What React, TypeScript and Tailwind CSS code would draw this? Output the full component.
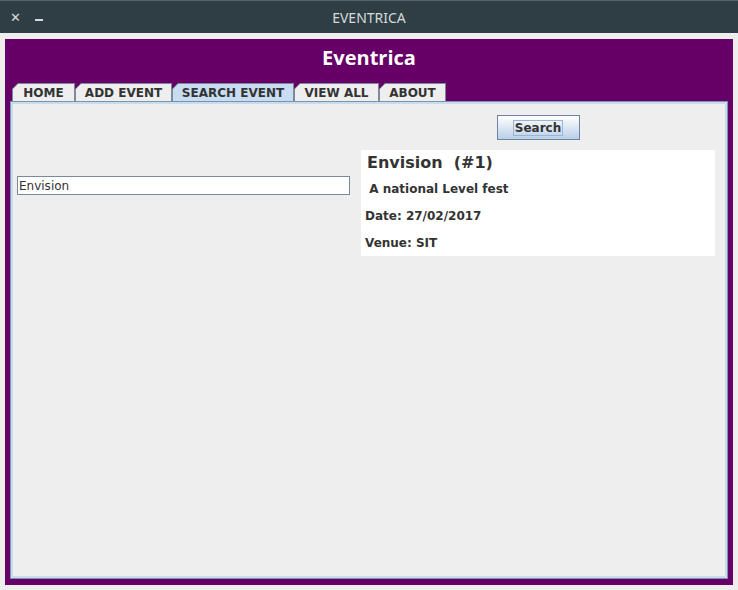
const font = { fontFamily: '"DejaVu Sans", sans-serif' };

function Tab({ label, active, width }: { label: string; active?: boolean; width: string }) {
  return (
    <div
      className={`${width} h-[18px] pt-px px-px bg-[#7b8a9a] [clip-path:polygon(0_6px,6px_0,100%_0,100%_100%,0_100%)]`}
    >
      <div
        className={`h-full flex items-center justify-center text-[12px] font-bold text-[#333333] leading-none [clip-path:polygon(0_5px,5px_0,100%_0,100%_100%,0_100%)] ${
          active ? "bg-[#c8ddf2]" : "bg-[#eeeeee]"
        }`}
      >
        {label}
      </div>
    </div>
  );
}

export default function App() {
  return (
    <div className="w-[738px] h-[590px] bg-[#eeeeee] flex flex-col" style={font}>
      {/* window title bar */}
      <div className="h-[33px] bg-[#2f3e45] border-t border-[#56636a] flex items-center relative">
        <div className="flex items-center gap-[14px] pl-[10px] text-[#d5dadc] absolute left-0">
          <span className="text-[13px] font-bold leading-none">✕</span>
          <span className="w-[8px] h-[2px] bg-[#d5dadc] mt-[6px]"></span>
        </div>
        <div
          className="flex-1 text-center text-[14px] text-[#d5dadc]"
          style={{ fontFamily: '"Noto Sans", sans-serif' }}
        >
          EVENTRICA
        </div>
      </div>

      {/* purple frame */}
      <div className="mt-[6px] mx-[5px] h-[546px] bg-[#660066] flex flex-col">
        <div
          className="h-[38px] flex items-center justify-center text-white text-[20px] font-bold"
          style={{ fontFamily: '"Open Sans", sans-serif' }}
        >
          Eventrica
        </div>
        <div className="flex pl-[7px] mt-[6px]">
          <Tab label="HOME" width="w-[63px]" />
          <Tab label="ADD EVENT" width="w-[97px]" />
          <Tab label="SEARCH EVENT" active width="w-[122px]" />
          <Tab label="VIEW ALL" width="w-[85px]" />
          <Tab label="ABOUT" width="w-[67px]" />
        </div>
        <div className="mx-[5px] h-[478px] border border-[#7d93ab]">
          <div className="h-full border-2 border-[#c8dcf0] bg-[#eeeeee] flex items-start pl-[4px] pt-[11px] gap-[11px]">
            <div className="w-[333px] h-[141px] flex items-center">
              <div className="w-full h-[19px] bg-white border border-[#7b8a9a] flex items-center pl-[1px] text-[12px] text-[#333333]">
                Envision
              </div>
            </div>
            <div className="w-[354px] flex flex-col items-center gap-[10px]">
              <button className="w-[83px] h-[25px] border border-[#6f84a0] bg-gradient-to-b from-white to-[#b9cfe8] flex items-center justify-center">
                <span className="border border-[#9db3cf] px-[1px] h-[16px] flex items-center text-[12px] font-bold text-[#333333] leading-none">
                  Search
                </span>
              </button>
              <div className="w-full h-[106px] bg-white pl-[4px] text-[#333333] font-bold">
                <div className="ml-[2px] text-[16px] leading-[26px]">Envision&nbsp;&nbsp;(#1)</div>
                <div className="text-[12px] leading-[27px]">{"\u00a0A national Level fest"}</div>
                <div className="text-[12px] leading-[27px]">Date: 27/02/2017</div>
                <div className="text-[12px] leading-[27px]">Venue: SIT</div>
              </div>
            </div>
          </div>
        </div>
      </div>
    </div>
  );
}
